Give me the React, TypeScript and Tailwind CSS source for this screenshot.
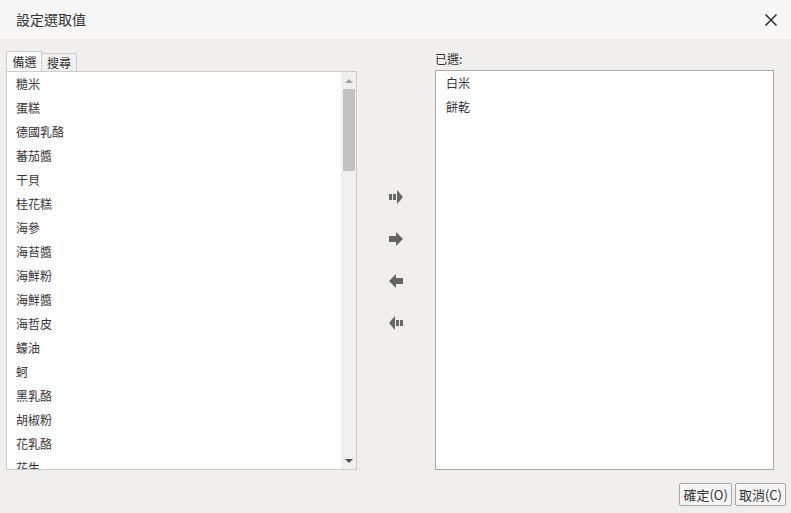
import React from 'react';

const candidates = [
  '糙米', '蛋糕', '德國乳酪', '蕃茄醬', '干貝', '桂花糕', '海參', '海苔醬', '海鮮粉',
  '海鮮醬', '海哲皮', '蠔油', '蚵', '黑乳酪', '胡椒粉', '花乳酪', '花生',
];

const selected = ['白米', '餅乾'];

const font = "font-['Noto_Sans_CJK_TC','Liberation_Sans',sans-serif]";

// arrow glyphs drawn on a 16x16 grid
const MoveAllRight = () => (
  <svg width="16" height="16" viewBox="0 0 16 16" fill="#666">
    <rect x="1" y="5" width="3" height="6" />
    <rect x="5" y="5" width="3" height="6" />
    <path d="M9 1 L15 8 L9 15 Z" />
  </svg>
);
const MoveRight = () => (
  <svg width="16" height="16" viewBox="0 0 16 16" fill="#666">
    <rect x="1" y="5" width="8" height="6" />
    <path d="M8 1 L15 8 L8 15 Z" />
  </svg>
);
const MoveLeft = () => (
  <svg width="16" height="16" viewBox="0 0 16 16" fill="#666">
    <rect x="7" y="5" width="8" height="6" />
    <path d="M8 1 L1 8 L8 15 Z" />
  </svg>
);
const MoveAllLeft = () => (
  <svg width="16" height="16" viewBox="0 0 16 16" fill="#666">
    <rect x="12" y="5" width="3" height="6" />
    <rect x="8" y="5" width="3" height="6" />
    <path d="M7 1 L1 8 L7 15 Z" />
  </svg>
);

export default function App() {
  return (
    <div className={`w-[791px] h-[513px] bg-[#f0efed] flex flex-col text-[#333] ${font}`}>
      {/* title bar */}
      <div className="h-[39px] bg-[#f7f7f7] flex items-center justify-between pl-4 pr-[13px] shrink-0">
        <span className="text-[14px]">設定選取值</span>
        <svg width="14" height="14" viewBox="0 0 14 14" stroke="#333" strokeWidth="1.6">
          <path d="M1.5 1.5 L12.5 12.5 M12.5 1.5 L1.5 12.5" />
        </svg>
      </div>

      <div className="flex pl-[6px] pt-[12px]">
        {/* left column */}
        <div className="w-[351px] flex flex-col">
          <div className="flex items-end h-[20px] text-[12px]">
            <div className="w-[36px] h-[20px] border border-b-0 border-[#ccc] bg-[#fafafa] flex items-center justify-center leading-none pl-[1px]">
              備選
            </div>
            <div className="w-[35px] h-[18px] border border-b-0 border-l-0 border-[#ccc] bg-[#f0f0f0] flex items-center justify-center leading-none">
              搜尋
            </div>
          </div>
          <div className="h-[399px] border border-[#ccc] bg-white flex">
            <ul className="flex-1 overflow-hidden text-[12px] pl-[9px]">
              {candidates.map((c) => (
                <li key={c} className="h-[24px] flex items-center">
                  {c}
                </li>
              ))}
            </ul>
            <div className="w-[15px] bg-[#f0f0f0] flex flex-col items-center">
              <div className="h-[17px] flex items-center justify-center">
                <div className="w-0 h-0 border-l-[4px] border-r-[4px] border-b-[4px] border-l-transparent border-r-transparent border-b-[#a3a3a3]" />
              </div>
              <div className="w-[12px] h-[82px] bg-[#c1c1c1]" />
              <div className="flex-1" />
              <div className="h-[17px] flex items-center justify-center">
                <div className="w-0 h-0 border-l-[4px] border-r-[4px] border-t-[4px] border-l-transparent border-r-transparent border-t-[#505050]" />
              </div>
            </div>
          </div>
        </div>

        {/* move buttons */}
        <div className="w-[78px] flex flex-col items-center pt-[138px] gap-[26px]">
          <MoveAllRight />
          <MoveRight />
          <MoveLeft />
          <MoveAllLeft />
        </div>

        {/* right column */}
        <div className="w-[339px] flex flex-col">
          <div className="h-[19px] text-[12px] flex items-start leading-none pt-[2px]">已選:</div>
          <div className="h-[400px] border border-[#a9a9a9] bg-white text-[12px] pl-[10px]">
            {selected.map((s) => (
              <div key={s} className="h-[24px] flex items-center">
                {s}
              </div>
            ))}
          </div>
        </div>
      </div>

      {/* footer */}
      <div className="flex justify-end gap-[3px] pr-[5px] pt-[13px]">
        <button className="h-[23px] px-[3px] border border-[#a9a9a9] rounded-[2px] bg-[#f5f5f5] text-[13px] leading-none">
          確定(O)
        </button>
        <button className="h-[23px] px-[3px] border border-[#a9a9a9] rounded-[2px] bg-[#f5f5f5] text-[13px] leading-none">
          取消(C)
        </button>
      </div>
    </div>
  );
}
